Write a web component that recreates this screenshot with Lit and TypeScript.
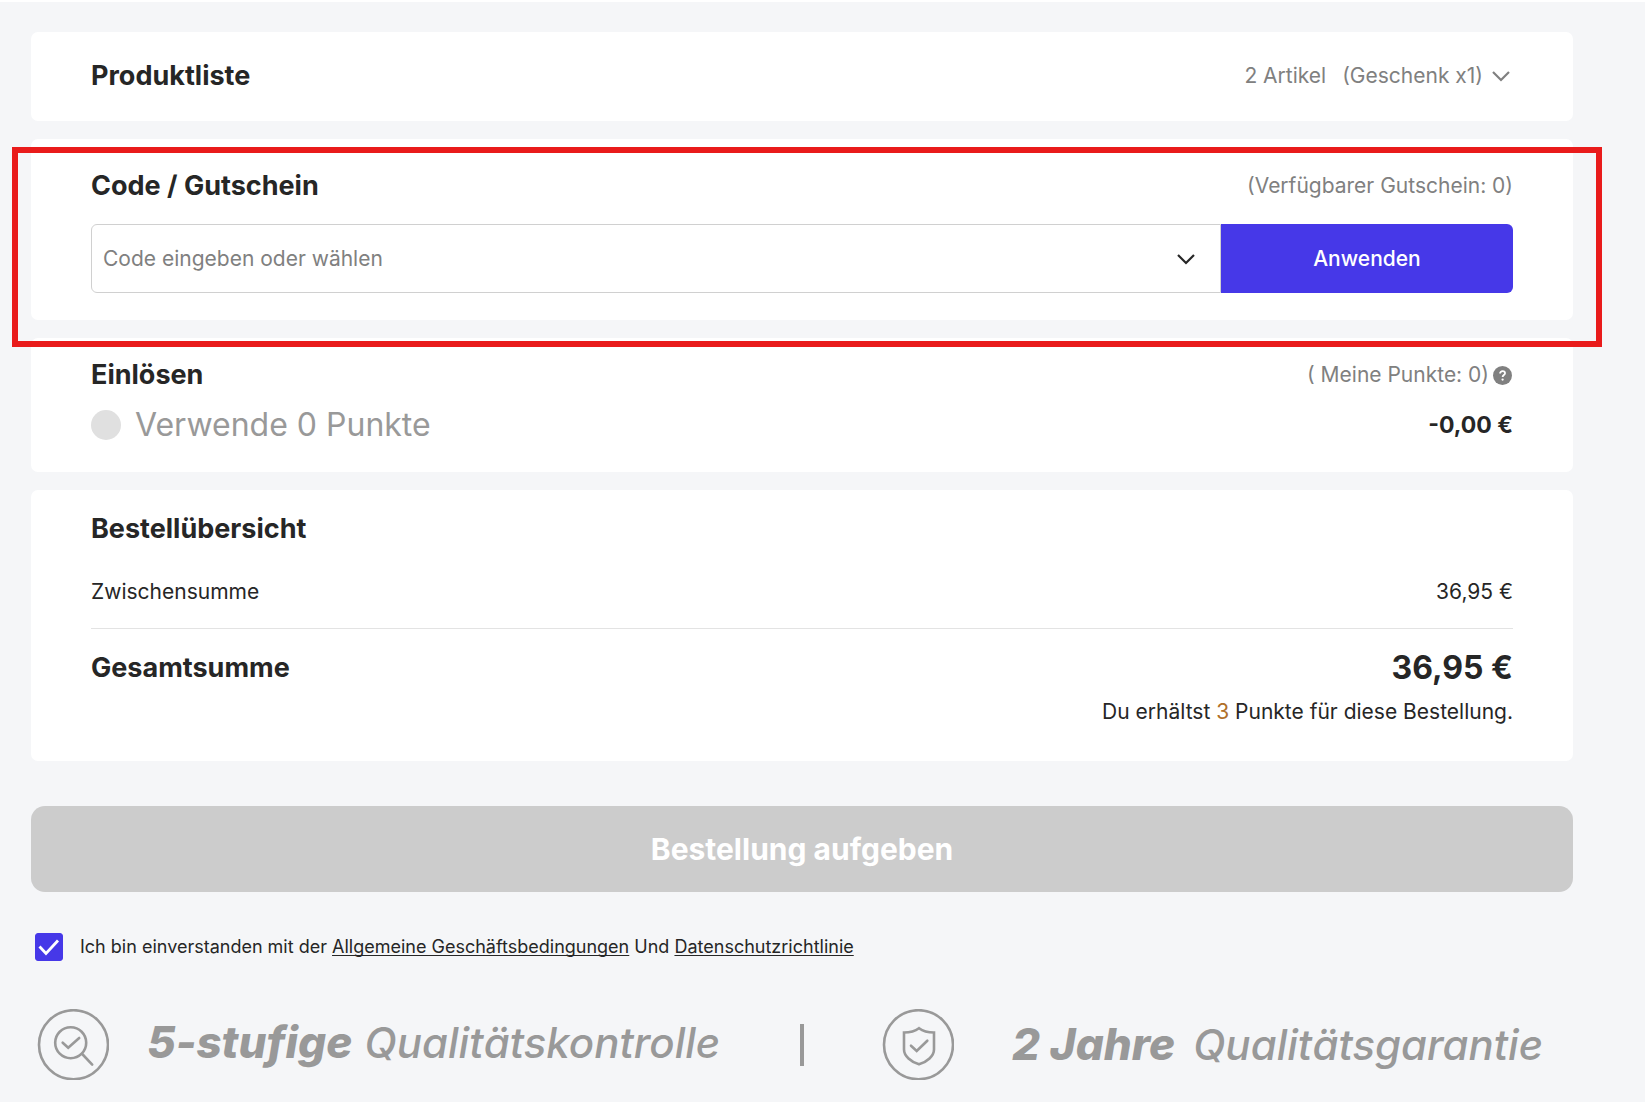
import { LitElement, html, css, svg } from "lit";
import { customElement, state } from "lit/decorators.js";

const chevron = html`<svg class="chevron" viewBox="0 0 20 12" aria-hidden="true">
  <path d="M2 2l8 8 8-8" fill="none" stroke="currentColor" stroke-width="2.200" />
</svg>`;

const magnifierMark = svg`
  <circle cx="33.7" cy="33.7" r="15.5" />
  <path d="M45.2 45l10 10.6" stroke-linecap="round" />
  <path d="M25.7 33.7l5.5 5 11-9.7" stroke-linecap="round" />`;

const shieldMark = svg`
  <path d="M37 19.2c4 3 8.500 4.300 15 4.300v17c0 6.500-7 12.500-15 14.800c-8-2.300-15-8.300-15-14.800v-17c6.500 0 11-1.300 15-4.300z" />
  <path d="M29 36.700l5.700 5.300 10.600-10.300" stroke-linecap="round" />`;

@customElement("app-root")
export class AppRoot extends LitElement {
  static styles = css`
    :host {
      display: block;
      font-family: Inter, "Liberation Sans", sans-serif;
      font-size: 21px;
      line-height: 36px;
      color: #262626;
    }
    * {
      box-sizing: border-box;
    }
    button,
    input {
      font: inherit;
      margin: 0;
    }
    button {
      border: 0;
      padding: 0;
      background: none;
      color: inherit;
    }
    h2,
    p {
      margin: 0;
    }
    .page {
      min-height: 100vh;
      padding: 30px 72px 18px 31px;
      border-top: 2px solid #fff;
      background: #f5f6f8;
    }
    .cards {
      display: flex;
      flex-direction: column;
      gap: 18px;
    }
    .card {
      padding: 26px 60px 27px;
      border-radius: 7px;
      background: #fff;
    }
    .voucher {
      position: relative;
      padding-top: 29px;
    }
    .redeem {
      padding: 19px 60px 29px;
    }
    .overview {
      padding: 21px 60px 31px;
    }
    .row {
      display: flex;
      align-items: center;
      justify-content: space-between;
    }
    .title {
      font-size: 27px;
      font-weight: 700;
    }
    .muted {
      color: #808080;
    }
    .toggle {
      display: flex;
      align-items: center;
      gap: 8px;
      padding-right: 2px;
    }
    .gift {
      margin-left: 8px;
    }
    .chevron {
      display: block;
      width: 20px;
      height: 12px;
    }
    .frame {
      position: absolute;
      inset: 8px -29px -27px -19px;
      border: 6px solid #e91b1b;
      pointer-events: none;
    }
    .code {
      display: flex;
      height: 69px;
      margin-top: 20px;
    }
    .field {
      flex: 1;
      display: flex;
      align-items: center;
      min-width: 0;
      padding: 0 24px 0 11px;
      border: 1px solid #d0d0d0;
      border-radius: 6px 0 0 6px;
    }
    .input {
      flex: 1;
      min-width: 0;
      padding: 0;
      border: 0;
      outline: 0;
      background: none;
      color: inherit;
    }
    .input::placeholder {
      color: #808080;
      opacity: 1;
    }
    .apply {
      width: 292px;
      border-radius: 0 6px 6px 0;
      background: #4638e8;
      color: #fff;
      font-weight: 500;
    }
    .help {
      width: 19px;
      height: 19px;
      margin: 0 1px 0 4px;
    }
    .help svg {
      display: block;
      width: 100%;
      height: 100%;
    }
    .points {
      display: flex;
      align-items: center;
    }
    .use {
      margin-top: 14px;
    }
    .option {
      display: flex;
      align-items: center;
      gap: 14px;
      color: #999;
      font-size: 32px;
    }
    .dot {
      appearance: none;
      width: 30px;
      height: 30px;
      border-radius: 50%;
      background: #e0e0e0;
    }
    .discount {
      font-size: 23px;
      font-weight: 700;
    }
    .subtotal {
      margin-top: 27px;
      padding-bottom: 18px;
      border-bottom: 1px solid #e3e3e3;
    }
    .total {
      margin-top: 21px;
    }
    .sum {
      font-size: 32px;
      font-weight: 700;
    }
    .note {
      margin-top: 8px;
      text-align: right;
    }
    .earned {
      color: #b0702a;
    }
    .order {
      display: block;
      width: 100%;
      height: 86px;
      margin-top: 45px;
      border-radius: 14px;
      background: #ccc;
      color: #fff;
      font-size: 30px;
      font-weight: 700;
    }
    .consent {
      display: flex;
      align-items: center;
      gap: 17px;
      margin-top: 37px;
      padding-left: 4px;
      font-size: 18px;
    }
    .tick {
      display: grid;
    }
    .tick > * {
      grid-area: 1 / 1;
      width: 28px;
      height: 28px;
    }
    .tick svg {
      pointer-events: none;
    }
    .box {
      appearance: none;
      border: 1px solid #4638e8;
      border-radius: 3px;
      background: #fff;
    }
    .box:checked {
      background: #4638e8;
    }
    .link {
      color: inherit;
      text-underline-offset: 2px;
      text-decoration-skip-ink: none;
    }
    .trust {
      display: grid;
      grid-template-columns: 1fr 4px 1fr;
      align-items: center;
      margin-top: 44px;
      color: #999;
      font-size: 42px;
      font-weight: 500;
      font-style: italic;
      white-space: nowrap;
    }
    .badge {
      display: flex;
      align-items: center;
      gap: 38px;
      padding-left: 6px;
    }
    .badge.right {
      gap: 58px;
      padding-left: 78px;
    }
    .badge svg {
      flex: none;
      width: 72px;
      height: 71px;
    }
    .slogan {
      display: flex;
      align-items: baseline;
      gap: 12px;
      padding-bottom: 4px;
    }
    .right .slogan {
      gap: 18px;
      padding-bottom: 0;
    }
    .strong {
      font-size: 44px;
      font-weight: 800;
    }
    .rule {
      height: 42px;
      background: #999;
    }
  `;

  @state() private agreed = true;

  private badge(mark: unknown, strong: string, text: string, side = "") {
    return html`<div class="badge ${side}">
      <svg viewBox="0 0 72 71" fill="none" stroke="#999" stroke-width="2.6" aria-hidden="true">
        <circle cx="36.500" cy="35.700" r="34.500" />
        ${mark}
      </svg>
      <p class="slogan"><strong class="strong">${strong}</strong> <span>${text}</span></p>
    </div>`;
  }

  render() {
    return html`<main class="page">
      <div class="cards">
        <section class="card row">
          <h2 class="title">Produktliste</h2>
          <button class="toggle muted" type="button" aria-expanded="false">
            <span>2 Artikel</span><span class="gift">(Geschenk x1)</span>${chevron}
          </button>
        </section>

        <section class="card voucher">
          <div class="row">
            <h2 class="title"><label for="code">Code / Gutschein</label></h2>
            <span class="muted">(Verfügbarer Gutschein: 0)</span>
          </div>
          <div class="code">
            <div class="field">
              <input class="input" id="code" type="text" placeholder="Code eingeben oder wählen" />
              <button type="button" aria-label="Gutschein wählen">${chevron}</button>
            </div>
            <button class="apply" type="button">Anwenden</button>
          </div>
          <div class="frame"></div>
        </section>

        <section class="card redeem">
          <div class="row">
            <h2 class="title">Einlösen</h2>
            <div class="points muted">
              <span>( Meine Punkte: 0)</span>
              <button class="help" type="button" aria-label="Hilfe">
                <svg viewBox="0 0 18 18" aria-hidden="true">
                  <circle cx="9" cy="9" r="9" fill="#808080" />
                  <path d="M6.700 7.200c0-1.500 1-2.300 2.400-2.300s2.300.8 2.300 2c0 1.700-2.300 1.700-2.300 3.500" fill="none" stroke="#fff" stroke-width="1.700" />
                  <circle cx="9.100" cy="12.900" r="1.100" fill="#fff" />
                </svg>
              </button>
            </div>
          </div>
          <div class="row use">
            <label class="option">
              <input class="dot" type="checkbox" disabled />Verwende 0 Punkte
            </label>
            <span class="discount">-0,00 €</span>
          </div>
        </section>

        <section class="card overview">
          <h2 class="title">Bestellübersicht</h2>
          <div class="row subtotal"><span>Zwischensumme</span><span>36,95 €</span></div>
          <div class="row total">
            <h2 class="title">Gesamtsumme</h2>
            <span class="sum">36,95 €</span>
          </div>
          <p class="note">
            Du erhältst <span class="earned">3</span> Punkte für diese Bestellung.
          </p>
        </section>
      </div>

      <button class="order" type="button" disabled>Bestellung aufgeben</button>

      <div class="consent">
        <span class="tick">
          <input
            class="box"
            id="agree"
            type="checkbox"
            .checked=${this.agreed}
            @change=${(e: Event) => (this.agreed = (e.target as HTMLInputElement).checked)}
          />
          <svg viewBox="0 0 28 28" aria-hidden="true">
            <path d="M4.500 13.500l6.500 7L23 7.500" fill="none" stroke="#fff" stroke-width="2.800" />
          </svg>
        </span>
        <label for="agree">
          Ich bin einverstanden mit der
          <a class="link" href="#agb">Allgemeine Geschäftsbedingungen</a> Und
          <a class="link" href="#datenschutz">Datenschutzrichtlinie</a>
        </label>
      </div>

      <div class="trust">
        ${this.badge(magnifierMark, "5-stufige", "Qualitätskontrolle")}
        <div class="rule"></div>
        ${this.badge(shieldMark, "2 Jahre", "Qualitätsgarantie", "right")}
      </div>
    </main>`;
  }
}
